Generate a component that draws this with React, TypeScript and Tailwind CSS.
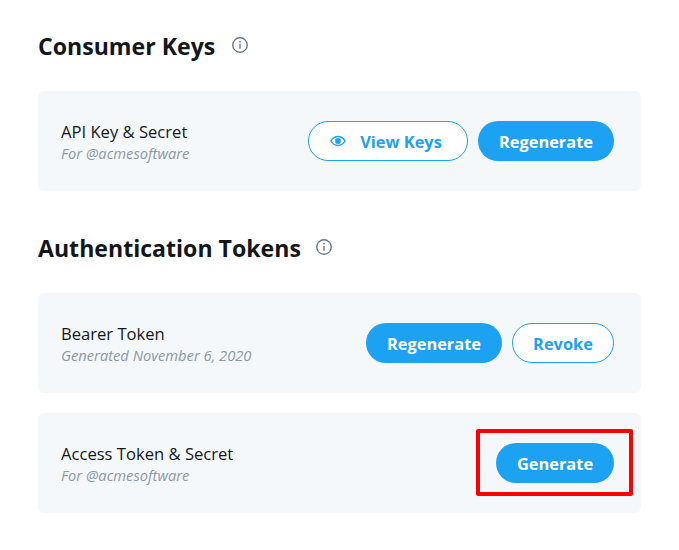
import React from 'react';

function InfoIcon() {
  return (
    <svg width="18" height="18" viewBox="0 0 18 18" fill="none" className="shrink-0 -translate-y-px">
      <circle cx="9" cy="9" r="7.25" stroke="#657786" strokeWidth="1.4" />
      <rect x="8.3" y="7.8" width="1.4" height="5" fill="#657786" />
      <rect x="8.3" y="5" width="1.4" height="1.5" fill="#657786" />
    </svg>
  );
}

function EyeIcon() {
  return (
    <svg width="16" height="12" viewBox="0 0 16 12" fill="none" className="shrink-0">
      <path d="M1 6c1.6-2.9 4-4.4 7-4.4S13.400 3.100 15 6c-1.600 2.900-4 4.400-7 4.400S2.600 8.900 1 6z" stroke="#1da1f2" strokeWidth="1.5" />
      <circle cx="8" cy="6" r="2.900" fill="#1da1f2" />
    </svg>
  );
}

function SolidButton({ label, width }: { label: string; width: string }) {
  return (
    <button className={`h-10 ${width} rounded-full bg-[#1da1f2] pt-[2px] text-white text-[16.4px] font-bold`}>
      {label}
    </button>
  );
}

function Row({ title, sub, children }: { title: string; sub: string; children: React.ReactNode }) {
  return (
    <div className="flex h-[100px] items-center justify-between rounded-md bg-[#f5f8fa] pl-[23px] pr-[27px]">
      <div className="pt-[2px]">
        <div className="text-[16.6px] leading-[22px] text-[#14171a]">{title}</div>
        <div className="text-[14.7px] leading-[20px] italic text-[#8b98a5]">{sub}</div>
      </div>
      <div className="flex items-center gap-[10px]">{children}</div>
    </div>
  );
}

export default function App() {
  return (
    <div className="relative h-[550px] w-[679px] overflow-hidden bg-white font-['Open_Sans','Noto_Sans',sans-serif]">
      <div className="w-[603px] ml-[38px] pt-[29px]">
        <div className="flex h-[34px] items-center gap-[16px]">
          <h2 className="text-[23.1px] font-bold text-[#14171a]">Consumer Keys</h2>
          <InfoIcon />
        </div>
        <div className="mt-[28px]">
          <Row title="API Key & Secret" sub="For @acmesoftware">
            <button className="flex h-10 w-[160px] items-center justify-center gap-[14px] rounded-full border border-[#1da1f2] bg-white pr-[4px] text-[16.4px] font-bold text-[#1da1f2]">
              <EyeIcon />
              <span className="pt-[2px]">View Keys</span>
            </button>
            <SolidButton label="Regenerate" width="w-[136px]" />
          </Row>
        </div>
        <div className="mt-[40px] flex h-[34px] items-center gap-[14px]">
          <h2 className="text-[23.1px] font-bold text-[#14171a]">Authentication Tokens</h2>
          <InfoIcon />
        </div>
        <div className="mt-[28px] flex flex-col gap-5">
          <Row title="Bearer Token" sub="Generated November 6, 2020">
            <SolidButton label="Regenerate" width="w-[136px]" />
            <button className="h-10 w-[102px] rounded-full border border-[#1da1f2] bg-white pt-[2px] text-[16.4px] font-bold text-[#1da1f2]">
              Revoke
            </button>
          </Row>
          <Row title="Access Token & Secret" sub="For @acmesoftware">
            <SolidButton label="Generate" width="w-[118px]" />
          </Row>
        </div>
      </div>
      {/* red highlight drawn over the screenshot */}
      <div className="absolute left-[476px] top-[429px] h-[67px] w-[157px] rounded-[2px] border-4 border-[#ff0000]" />
    </div>
  );
}
